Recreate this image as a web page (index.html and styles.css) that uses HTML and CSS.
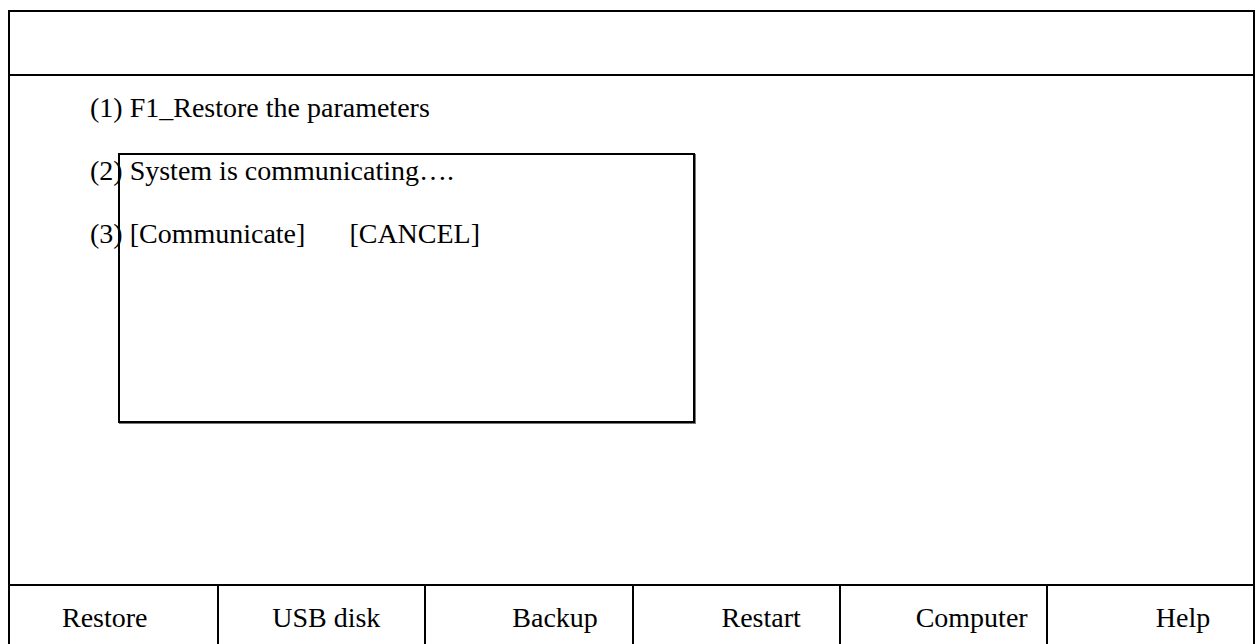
FILE: index.html
```html
<!DOCTYPE html>
<html>
<head>
<meta charset="utf-8">
<link rel="stylesheet" href="styles.css">
</head>
<body>
<div class="frame">
  <div class="header"></div>
  <div class="main">
    <div class="line">(1) F1_Restore the parameters</div>
    <div class="line">(2) System is communicating….</div>
    <div class="line">(3) [Communicate]<span class="gap"></span>[CANCEL]</div>
    <div class="dialog"></div>
  </div>
  <div class="footer">
    <div class="cell c1">Restore</div>
    <div class="cell c2">USB disk</div>
    <div class="cell c3">Backup</div>
    <div class="cell c4">Restart</div>
    <div class="cell c5">Computer</div>
    <div class="cell c6">Help</div>
  </div>
</div>
</body>
</html>
```
FILE: styles.css
```css
html, body {
  margin: 0;
  padding: 0;
  background: #fff;
  overflow: hidden;
}
body {
  font-family: "Liberation Serif", "Times New Roman", serif;
  font-size: 28px;
  color: #000;
}
.frame {
  margin: 10px 0 0 8px;
  width: 1247px;
  box-sizing: border-box;
  border: 2px solid #000;
  border-bottom: none;
}
.header {
  height: 62px;
  border-bottom: 2px solid #000;
}
.main {
  position: relative;
  height: 510px;
  border-bottom: 2px solid #000;
  padding-left: 80px;
  box-sizing: border-box;
}
.line {
  line-height: 63px;
  height: 63px;
  white-space: nowrap;
}
.gap {
  display: inline-block;
  width: 44px;
}
.dialog {
  position: absolute;
  left: 108px;
  top: 77px;
  width: 577px;
  height: 270px;
  box-sizing: border-box;
  border: 2px solid #000;
  box-shadow: 1px 1px 0 #777;
}
.footer {
  display: grid;
  grid-template-columns: repeat(6, 1fr);
  height: 64px;
}
.cell {
  border-left: 2px solid #000;
  line-height: 64px;
  white-space: nowrap;
}
.c1 { border-left: none; padding-left: 52px; }
.c2 { padding-left: 53px; }
.c3 { padding-left: 86px; }
.c4 { padding-left: 88px; }
.c5 { padding-left: 75px; }
.c6 { padding-left: 108px; }
```
